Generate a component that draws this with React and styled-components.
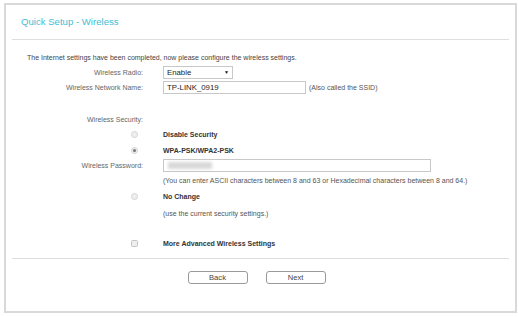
import React from "react";
import styled, { createGlobalStyle } from "styled-components";

const Global = createGlobalStyle`
  html, body { margin: 0; padding: 0; background: #fff; }
  body { font-family: "Liberation Sans", Arial, sans-serif; }
  * { box-sizing: border-box; }
`;

const Frame = styled.div`
  margin: 3px 0 0 4px;
  width: 513px;
  height: 310px;
  border: 2px solid #d9d9d9;
  background: #fff;
  display: flex;
  flex-direction: column;
`;

const Header = styled.div`
  height: 34px;
  display: flex;
  align-items: center;
  padding: 0 0 2px 15px;
`;

const Title = styled.h1`
  margin: 0;
  font-size: 9.6px;
  font-weight: normal;
  color: #3fbdd3;
`;

const Divider = styled.div`
  height: 1px;
  background: #dedede;
  margin: 0 6px 0 6px;
`;

const Form = styled.div`
  display: flex;
  flex-direction: column;
  padding-top: 10px;
  font-size: 7px;
  color: #555;
`;

const Intro = styled.div`
  height: 14px;
  display: flex;
  align-items: center;
  padding-left: 21px;
  color: #444;
`;

const Row = styled.div`
  display: grid;
  grid-template-columns: 137px 1fr;
  column-gap: 20px;
  align-items: center;
  height: ${(p) => p.$h || 16}px;
  margin-top: ${(p) => p.$mt || 0}px;
`;

const Label = styled.div`
  text-align: right;
  color: #666;
  white-space: nowrap;
`;

const MarkCell = styled.div`
  display: flex;
  justify-content: flex-end;
  padding-right: 5px;
`;

const Cell = styled.div`
  display: flex;
  align-items: center;
  gap: 3px;
  white-space: nowrap;
`;

const Strong = styled.span`
  font-weight: bold;
  color: #333;
`;

const Hint = styled.span`
  color: #555;
`;

const Select = styled.div`
  width: 70px;
  height: 13px;
  border: 1px solid #c8c8c8;
  display: flex;
  align-items: center;
  justify-content: space-between;
  padding: 0 3px 0 3px;
  color: #222;
  font-size: 7.8px;
`;

const Arrow = styled.span`
  font-size: 5px;
  color: #111;
`;

const Input = styled.div`
  width: ${(p) => p.$w}px;
  height: 13px;
  border: 1px solid #c8c8c8;
  display: flex;
  align-items: center;
  padding: 0 3px;
  color: #222;
  font-size: 7.8px;
`;

const Blur = styled.div`
  width: 44px;
  height: 7px;
  background: #d9d9d9;
  filter: blur(1.5px);
  margin-left: 1px;
`;

const Radio = styled.span`
  width: 7px;
  height: 7px;
  border-radius: 50%;
  border: 1px solid #d4d4d4;
  background: #eeeeee;
  display: flex;
  align-items: center;
  justify-content: center;
  &::after {
    content: "";
    width: 3px;
    height: 3px;
    border-radius: 50%;
    background: ${(p) => (p.$checked ? "#777" : "transparent")};
  }
`;

const Check = styled.span`
  width: 7px;
  height: 7px;
  border-radius: 1.5px;
  border: 1px solid #c4c4c4;
  background: #eee;
`;

const Footer = styled.div`
  margin-top: 7px;
`;

const Buttons = styled.div`
  display: flex;
  justify-content: center;
  gap: 18px;
  padding: 12px 8px 0 0;
`;

const Button = styled.button`
  width: 60px;
  height: 13px;
  border: 1px solid #9a9a9a;
  border-radius: 3px;
  background: #fff;
  font-family: inherit;
  font-size: 7.6px;
  color: #444;
  padding: 0;
  line-height: 11px;
`;

export default function App() {
  return (
    <>
      <Global />
      <Frame>
        <Header>
          <Title>Quick Setup - Wireless</Title>
        </Header>
        <Divider />
        <Form>
          <Intro>
            The Internet settings have been completed, now please configure the wireless settings.
          </Intro>
          <Row $h={16}>
            <Label>Wireless Radio:</Label>
            <Cell>
              <Select>
                <span>Enable</span>
                <Arrow>▼</Arrow>
              </Select>
            </Cell>
          </Row>
          <Row $h={15}>
            <Label>Wireless Network Name:</Label>
            <Cell>
              <Input $w={143}>TP-LINK_0919</Input>
              <Hint>(Also called the SSID)</Hint>
            </Cell>
          </Row>
          <Row $h={14} $mt={17}>
            <Label>Wireless Security:</Label>
            <Cell />
          </Row>
          <Row $h={16}>
            <MarkCell>
              <Radio />
            </MarkCell>
            <Cell>
              <Strong>Disable Security</Strong>
            </Cell>
          </Row>
          <Row $h={16}>
            <MarkCell>
              <Radio $checked />
            </MarkCell>
            <Cell>
              <Strong>WPA-PSK/WPA2-PSK</Strong>
            </Cell>
          </Row>
          <Row $h={14}>
            <Label>Wireless Password:</Label>
            <Cell>
              <Input $w={268}>
                <Blur />
              </Input>
            </Cell>
          </Row>
          <Row $h={16}>
            <span />
            <Cell>
              <Hint>
                (You can enter ASCII characters between 8 and 63 or Hexadecimal characters between 8 and 64.)
              </Hint>
            </Cell>
          </Row>
          <Row $h={16}>
            <MarkCell>
              <Radio />
            </MarkCell>
            <Cell>
              <Strong>No Change</Strong>
            </Cell>
          </Row>
          <Row $h={18}>
            <span />
            <Cell>
              <Hint>(use the current security settings.)</Hint>
            </Cell>
          </Row>
          <Row $h={16} $mt={13}>
            <MarkCell>
              <Check />
            </MarkCell>
            <Cell>
              <Strong>More Advanced Wireless Settings</Strong>
            </Cell>
          </Row>
        </Form>
        <Footer>
          <Divider />
          <Buttons>
            <Button>Back</Button>
            <Button>Next</Button>
          </Buttons>
        </Footer>
      </Frame>
    </>
  );
}
